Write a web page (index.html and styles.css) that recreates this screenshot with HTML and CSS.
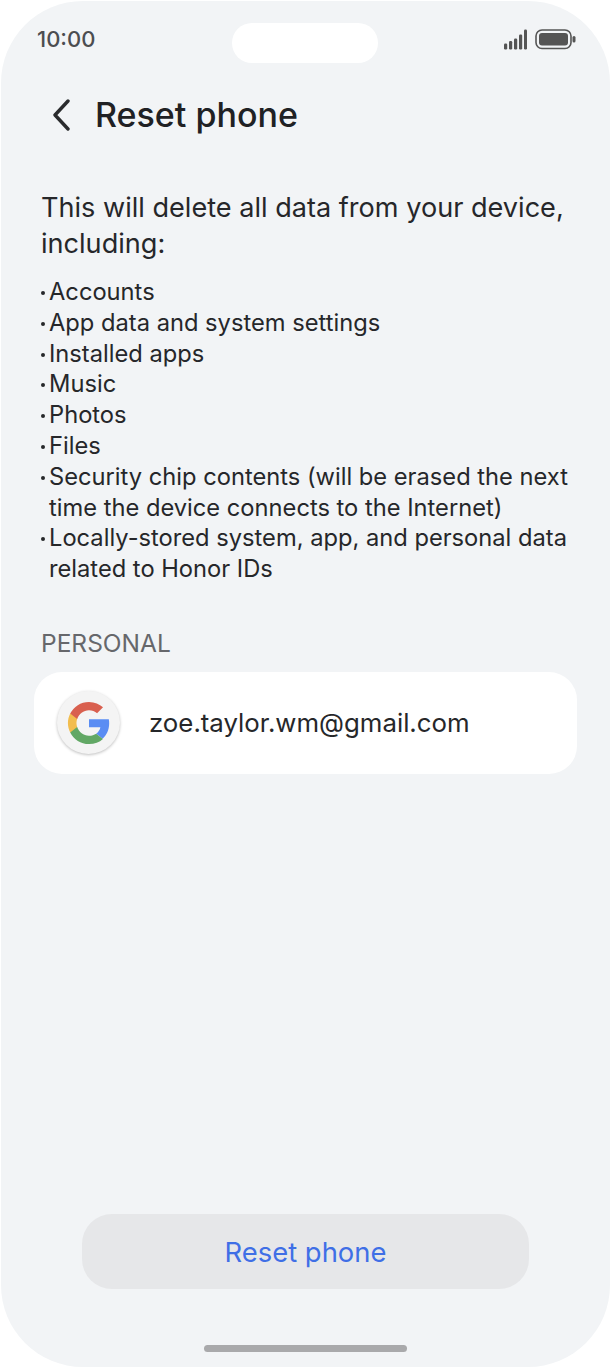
FILE: index.html
```html
<!DOCTYPE html>
<html lang="en">
<head>
  <meta charset="UTF-8">
  <meta name="viewport" content="width=device-width, initial-scale=1.0">
  <title>Reset phone</title>
  <link rel="stylesheet" href="styles.css">
</head>
<body>
  <div class="phone">
    <!-- Status bar -->
    <div class="status-bar">
      <span class="time">10:00</span>
      <div class="notch"></div>
      <div class="status-icons">
        <svg width="23" height="21" viewBox="0 0 23 21">
          <rect x="0" y="14.5" width="3.2" height="6" rx="1.2" fill="#555"/>
          <rect x="5" y="12" width="3.2" height="8.5" rx="1.2" fill="#555"/>
          <rect x="10" y="9.500" width="3.2" height="11" rx="1.2" fill="#555"/>
          <rect x="15" y="5.500" width="3.2" height="15" rx="1.2" fill="#555"/>
          <rect x="20" y="0.500" width="3" height="20" rx="1.2" fill="#555"/>
        </svg>
        <svg width="41" height="21" viewBox="0 0 41 21">
          <rect x="1" y="1" width="35" height="18.5" rx="6" fill="none" stroke="#555" stroke-width="1.6"/>
          <rect x="4" y="4" width="29" height="12.5" rx="3" fill="#555"/>
          <rect x="37.5" y="7" width="3" height="6.5" rx="1.5" fill="#555"/>
        </svg>
      </div>
    </div>

    <!-- Header -->
    <div class="header">
      <svg class="back" width="20" height="32" viewBox="0 0 20 32">
        <path d="M17 2 L4 16 L17 30" fill="none" stroke="#2a2b2d" stroke-width="3.4" stroke-linecap="round" stroke-linejoin="round"/>
      </svg>
      <h1>Reset phone</h1>
    </div>

    <p class="intro">This will delete all data from your device, including:</p>

    <ul class="data-list">
      <li>Accounts</li>
      <li>App data and system settings</li>
      <li>Installed apps</li>
      <li>Music</li>
      <li>Photos</li>
      <li>Files</li>
      <li>Security chip contents (will be erased the next time the device connects to the Internet)</li>
      <li>Locally-stored system, app, and personal data related to Honor IDs</li>
    </ul>

    <div class="section-title">PERSONAL</div>

    <div class="account-card">
      <div class="account-icon">
        <svg width="44" height="44" viewBox="0 0 48 48">
          <path fill="#5a8df3" d="M46 24.5c0-1.6-.1-3.1-.4-4.5H24v8.6h12.4c-.5 2.9-2.2 5.300-4.600 7l7.100 5.500C43.100 37.300 46 31.400 46 24.500z"/>
          <path fill="#62a865" d="M24 47c6.200 0 11.400-2.100 15.200-5.600l-7.400-5.700c-2.100 1.400-4.700 2.200-7.800 2.200-6 0-11-4-12.900-9.500H3.500v5.900C7.300 41.800 15 47 24 47z"/>
          <path fill="#f2bd4e" d="M11.100 28.400c-.5-1.400-.8-2.900-.8-4.400s.3-3 .8-4.400v-5.900H3.500C2 16.800 1 20.300 1 24s1 7.200 2.500 10.300l7.600-5.900z"/>
          <path fill="#d9604f" d="M24 10c3.400 0 6.400 1.200 8.800 3.400l6.500-6.500C35.400 3.300 30.200 1 24 1 15 1 7.300 6.200 3.500 13.700l7.600 5.900C13 14 18 10 24 10z"/>
        </svg>
      </div>
      <span class="account-email">zoe.taylor.wm@gmail.com</span>
    </div>

    <div class="footer">
      <button class="btn">Reset phone</button>
      <div class="home-bar"></div>
    </div>
  </div>
</body>
</html>
```

FILE: styles.css
```css
* {
  margin: 0;
  padding: 0;
  box-sizing: border-box;
}
body {
  font-family: Inter, "Noto Sans", sans-serif;
  background-color: #fff;
  color: #26272a;
  width: 611px;
  height: 1368px;
  overflow: hidden;
}
.phone {
  display: flex;
  flex-direction: column;
  width: 609px;
  height: 1366px;
  margin: 1px;
  background-color: #f2f4f6;
  border-radius: 82px;
}
.status-bar {
  display: flex;
  align-items: center;
  justify-content: space-between;
  position: relative;
  height: 40px;
  margin-top: 18px;
  padding: 0 34px 0 36px;
}
.time {
  font-size: 22px;
  font-weight: 500;
  color: #4c4d50;
}
.notch {
  position: absolute;
  left: 231px;
  top: 4px;
  width: 146px;
  height: 40px;
  background-color: #fff;
  border-radius: 20px;
}
.status-icons {
  display: flex;
  align-items: center;
  gap: 8px;
}
.header {
  display: flex;
  align-items: center;
  gap: 24px;
  margin-top: 33px;
  padding-left: 50px;
}
.header h1 {
  font-size: 34px;
  font-weight: 500;
  line-height: 46px;
  color: #202124;
}
.intro {
  margin-top: 52px;
  padding: 0 30px 0 40px;
  font-size: 27.1px;
  line-height: 36px;
}
.data-list {
  list-style: none;
  margin-top: 15px;
  padding: 0 30px 0 48px;
  font-size: 23.7px;
  line-height: 30.8px;
}
.data-list li {
  position: relative;
}
.data-list li::before {
  content: "";
  position: absolute;
  left: -8px;
  top: 14px;
  width: 4px;
  height: 4px;
  border-radius: 50%;
  background-color: #26272a;
}
.section-title {
  margin-top: 42px;
  padding-left: 40px;
  font-size: 24.5px;
  line-height: 32px;
  color: #66676b;
}
.account-card {
  display: flex;
  align-items: center;
  gap: 29px;
  height: 102px;
  margin: 13px 33px 0;
  padding-left: 23px;
  background-color: #fff;
  border-radius: 28px;
}
.account-icon {
  display: flex;
  align-items: center;
  justify-content: center;
  width: 63px;
  height: 63px;
  background-color: #f4f4f4;
  border-radius: 50%;
  box-shadow: 0 1px 3px rgba(0, 0, 0, 0.25);
}
.account-email {
  font-size: 25.8px;
}
.footer {
  display: flex;
  flex-direction: column;
  align-items: center;
  margin-top: auto;
  padding-bottom: 15px;
}
.btn {
  width: 447px;
  height: 75px;
  background-color: #e6e7e9;
  color: #3f6fe6;
  border: none;
  border-radius: 30px;
  font-family: inherit;
  font-size: 27.4px;
}
.home-bar {
  width: 203px;
  height: 7px;
  margin-top: 56px;
  background-color: #a9a9ab;
  border-radius: 4px;
}
```
